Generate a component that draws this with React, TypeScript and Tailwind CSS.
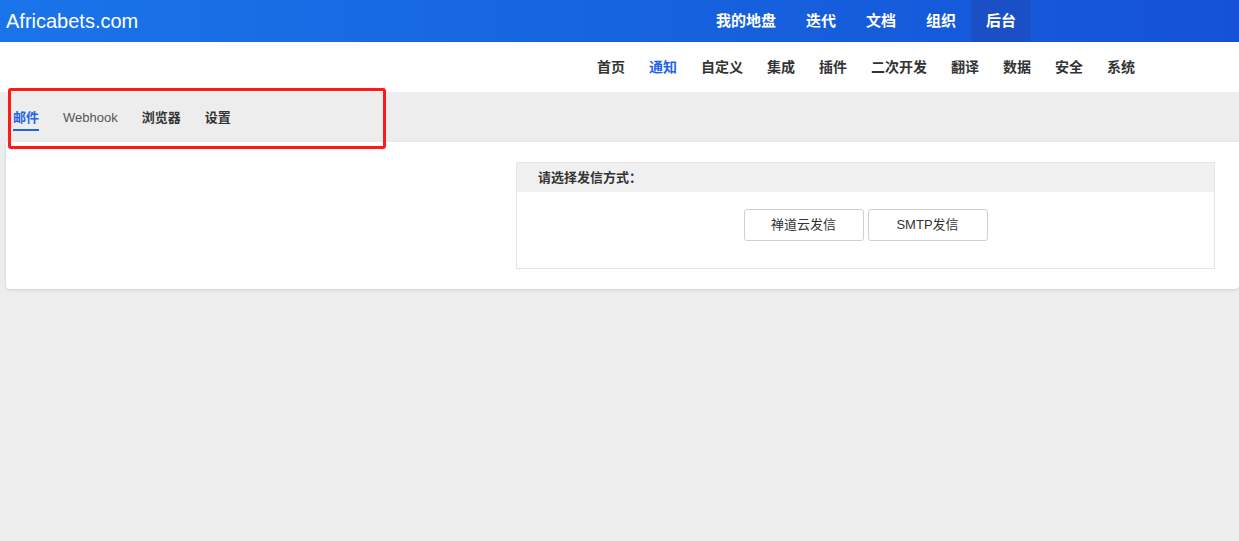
import React from "react";

const cjk = { fontFamily: '"Liberation Sans", Arial, "Noto Sans CJK SC", sans-serif' };

const topNav = ["我的地盘", "迭代", "文档", "组织", "后台"];
const subNav = ["首页", "通知", "自定义", "集成", "插件", "二次开发", "翻译", "数据", "安全", "系统"];
const tabs = ["邮件", "Webhook", "浏览器", "设置"];

export default function App() {
  return (
    <div className="relative min-h-[541px] bg-[#ededed]" style={cjk}>
      <header className="flex h-[42px] items-center bg-gradient-to-r from-[#1a74e9] to-[#1552d6]">
        <div className="pl-[6px] text-[20px] leading-none text-white">Africabets.com</div>
        <nav className="ml-auto flex h-full pr-[208px]">
          {topNav.map((item) => (
            <a
              key={item}
              className={`flex h-full items-center px-[15px] text-[15px] font-bold text-white ${
                item === "后台" ? "bg-[#1a4fc6]" : ""
              }`}
            >
              {item}
            </a>
          ))}
        </nav>
      </header>

      <div className="flex h-[50px] items-center justify-end bg-white pr-[92px]">
        {subNav.map((item) => (
          <a
            key={item}
            className={`px-3 text-[14px] font-bold ${item === "通知" ? "text-[#2463e8]" : "text-[#333]"}`}
          >
            {item}
          </a>
        ))}
      </div>

      <div className="flex h-[50px] items-center gap-6 pl-[13px]">
        {tabs.map((tab) => (
          <div key={tab} className="relative flex h-full items-center pt-[2px]">
            <span
              className={`text-[13px] ${
                tab === "邮件"
                  ? "font-bold text-[#2463e8]"
                  : tab === "Webhook"
                  ? "text-[#555]"
                  : "font-bold text-[#333]"
              }`}
            >
              {tab}
            </span>
            {tab === "邮件" && (
              <span className="absolute left-0 right-0 top-[37px] h-[2px] bg-[#2463e8]" />
            )}
          </div>
        ))}
      </div>

      <main className="ml-[6px] flex rounded-b bg-white pb-[20px] pr-[24px] pt-[20px] shadow-[0_1px_3px_rgba(0,0,0,0.12)]">
        <div className="w-[510px] shrink-0" />
        <section className="flex-1 border border-[#e5e5e5]">
          <div className="flex h-[29px] items-center bg-[#f0f0f0] pl-[21px] text-[13px] font-bold text-[#333]">
            请选择发信方式：
          </div>
          <div className="flex justify-center gap-[4px] pb-[27px] pt-[17px]">
            <button className="h-[32px] w-[120px] rounded-[3px] border border-[#d0d0d0] bg-white text-[13px] text-[#333]">
              禅道云发信
            </button>
            <button className="h-[32px] w-[120px] rounded-[3px] border border-[#d0d0d0] bg-white text-[13px] text-[#333]">
              SMTP发信
            </button>
          </div>
        </section>
      </main>

      <div className="pointer-events-none absolute left-[8px] top-[88px] h-[61px] w-[378px] rounded-[3px] border-[3px] border-[#ff1a1a]" />
    </div>
  );
}
